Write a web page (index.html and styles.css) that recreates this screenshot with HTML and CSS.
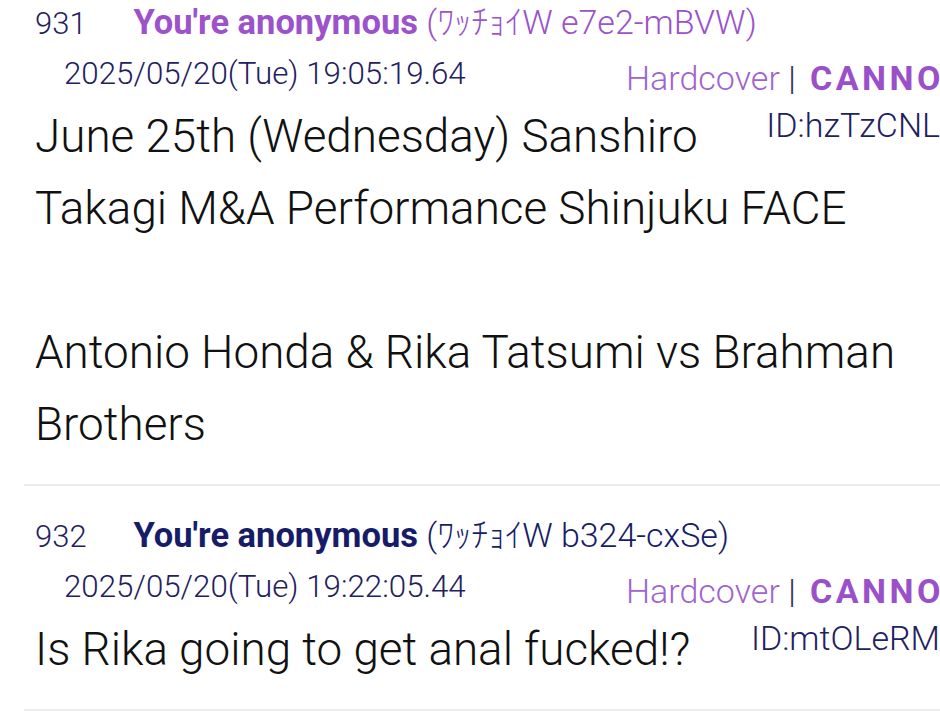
FILE: index.html
```html
<!DOCTYPE html>
<html lang="en">
<head>
<meta charset="utf-8">
<title>Thread</title>
<link rel="stylesheet" href="styles.css">
</head>
<body>
<div class="thread">
  <article class="post">
    <div class="head">
      <span class="num">931</span>
      <span class="name name-purple"><b class="handle">You're anonymous</b> (ﾜｯﾁｮｲW e7e2-mBVW)</span>
    </div>
    <div class="meta">
      <div class="date">2025/05/20(Tue) 19:05:19.64</div>
      <div class="src"><span class="book">Hardcover</span> <span class="bar">|</span> <b class="brand">CANNONBALL</b></div>
    </div>
    <div class="body"><span class="uid">ID:hzTzCNL</span>June 25th (Wednesday) Sanshiro Takagi M&amp;A Performance Shinjuku FACE<br><br>Antonio Honda &amp; Rika Tatsumi vs Brahman Brothers</div>
  </article>
  <article class="post">
    <div class="head">
      <span class="num">932</span>
      <span class="name name-navy"><b class="handle">You're anonymous</b> (ﾜｯﾁｮｲW b324-cxSe)</span>
    </div>
    <div class="meta">
      <div class="date">2025/05/20(Tue) 19:22:05.44</div>
      <div class="src"><span class="book">Hardcover</span> <span class="bar">|</span> <b class="brand">CANNONBALL</b></div>
    </div>
    <div class="body"><span class="uid">ID:mtOLeRM</span>Is Rika going to get anal fucked!?</div>
  </article>
</div>
</body>
</html>
```
FILE: styles.css
```css
html, body {
  margin: 0;
  padding: 0;
  background: #ffffff;
  overflow: hidden;
}
body {
  font-family: Roboto, "Noto Sans CJK JP", "Noto Sans", sans-serif;
  color: #111111;
}
.thread {
  width: 940px;
  overflow: hidden;
  margin-top: -27px;
}
.post {
  margin-left: 24px;
  padding: 27px 0 23px 11px;
  border-bottom: 2px solid #ededed;
}
.head {
  height: 44px;
  line-height: 44px;
  margin-bottom: 12px;
  white-space: nowrap;
  font-size: 30px;
}
.num {
  color: #1f2160;
  font-weight: 300;
  font-size: 31px;
  display: inline-block;
  width: 91px;
}
.name {
  font-weight: 300;
  font-size: 34px;
}
.handle {
  font-weight: 700;
  font-size: 34.5px;
}
.name-purple { color: #9b52ca; }
.name-navy { color: #171c68; }
.meta {
  display: flex;
  align-items: flex-start;
  margin-bottom: 1px;
}
.date {
  padding-left: 29px;
  font-size: 31.3px;
  line-height: 36px;
  color: #1f2160;
  font-weight: 300;
  white-space: nowrap;
}
.src {
  flex: none;
  margin-left: auto;
  width: 314px;
  font-size: 34px;
  line-height: 44px;
  font-weight: 300;
  white-space: nowrap;
}
.book { color: #a064cf; }
.bar { color: #2b2d5a; }
.brand {
  color: #9a50c8;
  font-weight: 700;
  letter-spacing: 3.5px;
  margin-left: 6px;
}
.body {
  font-size: 45.8px;
  line-height: 72px;
  font-weight: 300;
  color: #111111;
}
.uid {
  float: right;
  font-size: 34px;
  line-height: 48px;
  font-weight: 300;
  color: #1f2160;
}
```
